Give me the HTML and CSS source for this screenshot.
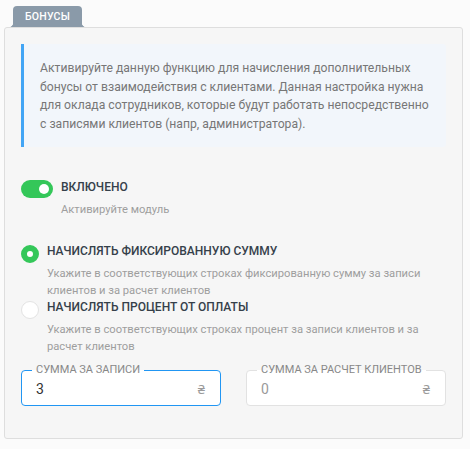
FILE: index.html
```html
<!DOCTYPE html>
<html lang="ru">
<head>
    <meta charset="UTF-8">
    <meta name="viewport" content="width=device-width, initial-scale=1.0">
    <title>Бонусы</title>
    <link rel="stylesheet" href="styles.css">
</head>
<body>
    <div class="page">
        <div class="tab">БОНУСЫ</div>
        <div class="panel">
            <div class="info">
                Активируйте данную функцию для начисления дополнительных бонусы от взаимодействия с клиентами. Данная настройка нужна для оклада сотрудников, которые будут работать непосредственно с записями клиентов (напр, администратора).
            </div>

            <div class="option option-switch">
                <span class="switch on"><span class="knob"></span></span>
                <div class="option-text">
                    <div class="option-title">ВКЛЮЧЕНО</div>
                    <div class="option-hint">Активируйте модуль</div>
                </div>
            </div>

            <div class="option option-first">
                <span class="radio checked"></span>
                <div class="option-text">
                    <div class="option-title">НАЧИСЛЯТЬ ФИКСИРОВАННУЮ СУММУ</div>
                    <div class="option-hint">Укажите в соответствующих строках фиксированную сумму за записи клиентов и за расчет клиентов</div>
                </div>
            </div>

            <div class="option">
                <span class="radio"></span>
                <div class="option-text">
                    <div class="option-title">НАЧИСЛЯТЬ ПРОЦЕНТ ОТ ОПЛАТЫ</div>
                    <div class="option-hint">Укажите в соответствующих строках процент за записи клиентов и за расчет клиентов</div>
                </div>
            </div>

            <div class="fields">
                <div class="field focused">
                    <span class="field-label">СУММА ЗА ЗАПИСИ</span>
                    <span class="field-value">3</span>
                    <span class="field-unit">₴</span>
                </div>
                <div class="field">
                    <span class="field-label">СУММА ЗА РАСЧЕТ КЛИЕНТОВ</span>
                    <span class="field-value empty">0</span>
                    <span class="field-unit">₴</span>
                </div>
            </div>
        </div>
    </div>
</body>
</html>
```

FILE: styles.css
```css
body {
    margin: 0;
    padding: 0;
    font-family: Roboto, "Noto Sans", sans-serif;
    background-color: #fbfbfb;
    color: #35404a;
}

.page {
    padding: 5px 0 0 4px;
}

.tab {
    position: relative;
    display: inline-block;
    margin-left: 9px;
    padding: 0 12px;
    height: 21px;
    line-height: 21px;
    font-size: 10.5px;
    font-weight: 500;
    letter-spacing: 0.2px;
    color: #fff;
    background-color: #8a9aa9;
    border-radius: 4px 4px 0 0;
}

.tab::before,
.tab::after {
    content: "";
    position: absolute;
    bottom: 0;
    width: 3px;
    height: 3px;
}

.tab::before {
    left: -3px;
    background: radial-gradient(circle at 0 0, transparent 2.5px, #8a9aa9 3px);
}

.tab::after {
    right: -3px;
    background: radial-gradient(circle at 100% 0, transparent 2.5px, #8a9aa9 3px);
}

.panel {
    box-sizing: border-box;
    width: 459px;
    padding: 16px 16px 32px;
    background-color: #f6f6f6;
    border: 1px solid #dedede;
    border-radius: 3px;
}

.info {
    padding: 15px 10px 13px 16px;
    font-size: 12.2px;
    line-height: 18.7px;
    color: #777;
    background-color: #f2f6fb;
    border-left: 3px solid #42a5f5;
    border-radius: 0 3px 3px 0;
}

.option {
    display: flex;
    align-items: flex-start;
    gap: 8px;
}

.option-switch {
    margin-top: 32px;
    margin-bottom: 25px;
}

.option-title {
    font-size: 12px;
    font-weight: 500;
    line-height: 16px;
    color: #35404a;
}

.option-hint {
    margin-top: 7px;
    font-size: 11.2px;
    line-height: 16.5px;
    color: #9e9e9e;
}

.switch {
    flex: none;
    display: flex;
    align-items: center;
    justify-content: flex-end;
    box-sizing: border-box;
    width: 32px;
    height: 18px;
    margin-top: 1px;
    padding: 0 4px;
    border-radius: 9px;
    background-color: #34c759;
}

.knob {
    width: 10px;
    height: 10px;
    border-radius: 50%;
    background-color: #fff;
}

.radio {
    flex: none;
    box-sizing: border-box;
    width: 18px;
    height: 18px;
    margin-top: 2px;
    border-radius: 50%;
    background-color: #fff;
    border: 1px solid #e3e3e3;
}

.radio.checked {
    border: 6px solid #34c759;
}

.fields {
    display: grid;
    grid-template-columns: 1fr 1fr;
    gap: 25px;
    margin-top: 15px;
}

.field {
    position: relative;
    display: flex;
    align-items: center;
    justify-content: space-between;
    height: 36px;
    box-sizing: border-box;
    padding: 2px 15px 0 14px;
    background-color: #fff;
    border: 1px solid #e2e2e2;
    border-radius: 4px;
}

.field.focused {
    border-color: #2196f3;
}

.field-label {
    position: absolute;
    top: -7px;
    left: 10px;
    padding: 0 4px;
    font-size: 11px;
    line-height: 12px;
    color: #888;
    background: linear-gradient(to bottom, #f6f6f6 50%, #fff 50%);
}

.field-value {
    font-size: 14px;
    color: #333;
}

.field-value.empty {
    color: #9a9a9a;
}

.field-unit {
    font-size: 13px;
    color: #9a9a9a;
}
```
